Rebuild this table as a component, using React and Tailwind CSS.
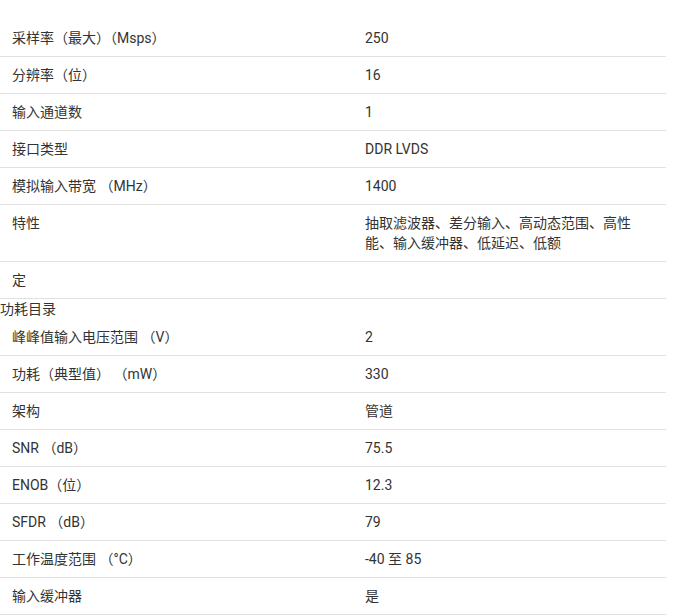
import React from 'react';

const rowsTop = [
  ['采样率（最大）（Msps）', '250'],
  ['分辨率（位）', '16'],
  ['输入通道数', '1'],
  ['接口类型', 'DDR LVDS'],
  ['模拟输入带宽 （MHz）', '1400'],
  ['特性', '抽取滤波器、差分输入、高动态范围、高性能、输入缓冲器、低延迟、低额'],
  ['定', ''],
];

const rowsBottom = [
  ['峰峰值输入电压范围 （V）', '2'],
  ['功耗（典型值） （mW）', '330'],
  ['架构', '管道'],
  ['SNR （dB）', '75.5'],
  ['ENOB（位）', '12.3'],
  ['SFDR （dB）', '79'],
  ['工作温度范围 （°C）', '-40 至 85'],
  ['输入缓冲器', '是'],
];

const Row = ({ label, value }) => (
  <div className="flex border-b border-[#e0e0e0]">
    <div className="w-[353px] px-3 py-2">{label}</div>
    <div className="w-[313px] px-3 py-2">{value}</div>
  </div>
);

export default function App() {
  return (
    <div
      className="bg-white w-[675px] h-[615px] overflow-hidden pt-[20px] text-[14px] leading-5 text-[#333]"
      style={{ fontFamily: 'Roboto, "Noto Sans CJK SC", sans-serif' }}
    >
      <div className="w-[666px]">
        {rowsTop.map(([l, v], i) => (
          <Row key={i} label={l} value={v} />
        ))}
        <div>功耗目录</div>
        {rowsBottom.map(([l, v], i) => (
          <Row key={i} label={l} value={v} />
        ))}
      </div>
    </div>
  );
}
